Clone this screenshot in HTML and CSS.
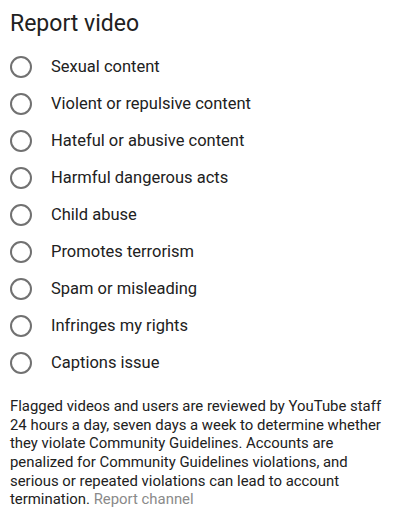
FILE: index.html
```html
<!DOCTYPE html>
<html>
<head>
<meta charset="utf-8">
<link rel="stylesheet" href="styles.css">
</head>
<body>
<div class="dialog">
  <h1 class="title">Report video</h1>
  <ul class="options">
    <li class="option"><span class="radio"></span><span class="label">Sexual content</span></li>
    <li class="option"><span class="radio"></span><span class="label">Violent or repulsive content</span></li>
    <li class="option"><span class="radio"></span><span class="label">Hateful or abusive content</span></li>
    <li class="option"><span class="radio"></span><span class="label">Harmful dangerous acts</span></li>
    <li class="option"><span class="radio"></span><span class="label">Child abuse</span></li>
    <li class="option"><span class="radio"></span><span class="label">Promotes terrorism</span></li>
    <li class="option"><span class="radio"></span><span class="label">Spam or misleading</span></li>
    <li class="option"><span class="radio"></span><span class="label">Infringes my rights</span></li>
    <li class="option"><span class="radio"></span><span class="label">Captions issue</span></li>
  </ul>
  <p class="note">Flagged videos and users are reviewed by YouTube staff 24 hours a day, seven days a week to determine whether they violate Community Guidelines. Accounts are penalized for Community Guidelines violations, and serious or repeated violations can lead to account termination. <a class="link">Report channel</a></p>
</div>
</body>
</html>
```

FILE: styles.css
```css
html, body {
  margin: 0;
  padding: 0;
  background: #ffffff;
}
body {
  font-family: Roboto, "Noto Sans", sans-serif;
  color: #212121;
}
.dialog {
  padding: 9px 10px 0 10px;
}
.title {
  margin: 0;
  font-size: 23px;
  font-weight: 400;
  line-height: 30px;
}
.options {
  list-style: none;
  margin: 9px 0 0 0;
  padding: 0;
}
.option {
  display: flex;
  align-items: center;
  height: 37px;
}
.radio {
  width: 18px;
  height: 18px;
  border: 2px solid #717171;
  border-radius: 50%;
  flex: none;
}
.label {
  margin-left: 19px;
  font-size: 16.5px;
}
.note {
  margin: 16px 0 0 0;
  font-size: 14.9px;
  line-height: 18.66px;
  color: #212121;
}
.link {
  color: #8a8a8a;
}
```
